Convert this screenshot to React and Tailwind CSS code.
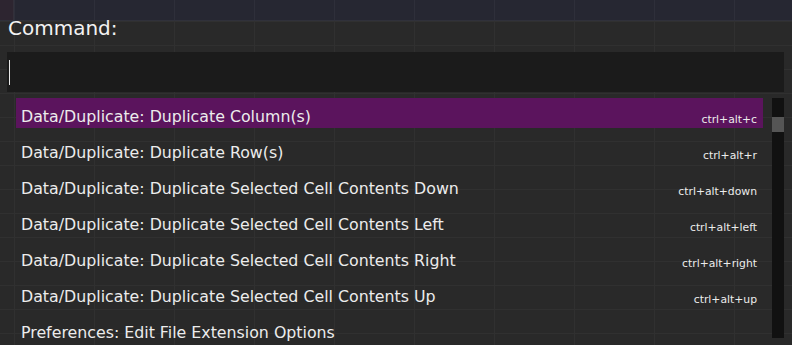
const COMMANDS = [
  { label: "Data/Duplicate: Duplicate Column(s)", keys: "ctrl+alt+c" },
  { label: "Data/Duplicate: Duplicate Row(s)", keys: "ctrl+alt+r" },
  { label: "Data/Duplicate: Duplicate Selected Cell Contents Down", keys: "ctrl+alt+down" },
  { label: "Data/Duplicate: Duplicate Selected Cell Contents Left", keys: "ctrl+alt+left" },
  { label: "Data/Duplicate: Duplicate Selected Cell Contents Right", keys: "ctrl+alt+right" },
  { label: "Data/Duplicate: Duplicate Selected Cell Contents Up", keys: "ctrl+alt+up" },
  { label: "Preferences: Edit File Extension Options", keys: "" },
];

export default function App() {
  return (
    <div className="relative w-[792px] h-[345px] overflow-hidden bg-[#292929] font-['DejaVu_Sans',sans-serif] text-[#ececec]">
      {/* sheet grid behind the palette */}
      <div className="absolute inset-0 bg-[linear-gradient(to_right,#303030_1px,transparent_1px),linear-gradient(to_bottom,#303030_1px,transparent_1px)] bg-[size:80px_24px] bg-[position:14px_21px]" />
      <div className="absolute left-0 top-0 w-full h-[21px] bg-[#262732] border-b border-[#30313a] flex">
        <div className="w-[14px] h-full bg-[#2d2530] border-r border-[#33303a]" />
        <div className="flex-1 bg-[linear-gradient(to_right,#2e2f3a_1px,transparent_1px)] bg-[size:80px_21px]" />
      </div>

      {/* COMMAND PALETTE */}
      <div className="relative flex flex-col pt-[16px]">
        <div className="pl-[8px] text-[20px] leading-[24px] text-[#f2f2f2]">Command:</div>

        <div className="mt-[12px] mx-[7px] mr-[8px] h-[40px] bg-[#1b1b1b] flex items-center pl-[2px]">
          <div className="w-[1px] h-[25px] bg-[#e8e8e8]" />
        </div>

        <div className="mt-[6px] flex pl-[16px] pr-[8px]">
          <div className="flex-1 flex flex-col gap-[6px]">
            {COMMANDS.map((c, i) => (
              <Row key={c.label} active={i === 0} {...c} />
            ))}
          </div>

          {/* SCROLLBAR */}
          <div className="ml-[9px] w-[12px] h-[240px] bg-[#111111] flex flex-col">
            <div className="mt-[19px] h-[15px] bg-[#555555]" />
          </div>
        </div>
      </div>
    </div>
  );
}

function Row({ label, keys, active }) {
  return (
    <div
      className={`h-[30px] shrink-0 flex items-baseline justify-between pt-[6.5px] pl-[5px] pr-[6px] ${
        active ? "bg-[#5e1360]/95" : ""
      }`}
    >
      <span className="text-[15.8px] leading-normal whitespace-nowrap">{label}</span>
      <span className="relative top-[1px] text-[10.8px] leading-normal whitespace-nowrap">{keys}</span>
    </div>
  );
}
